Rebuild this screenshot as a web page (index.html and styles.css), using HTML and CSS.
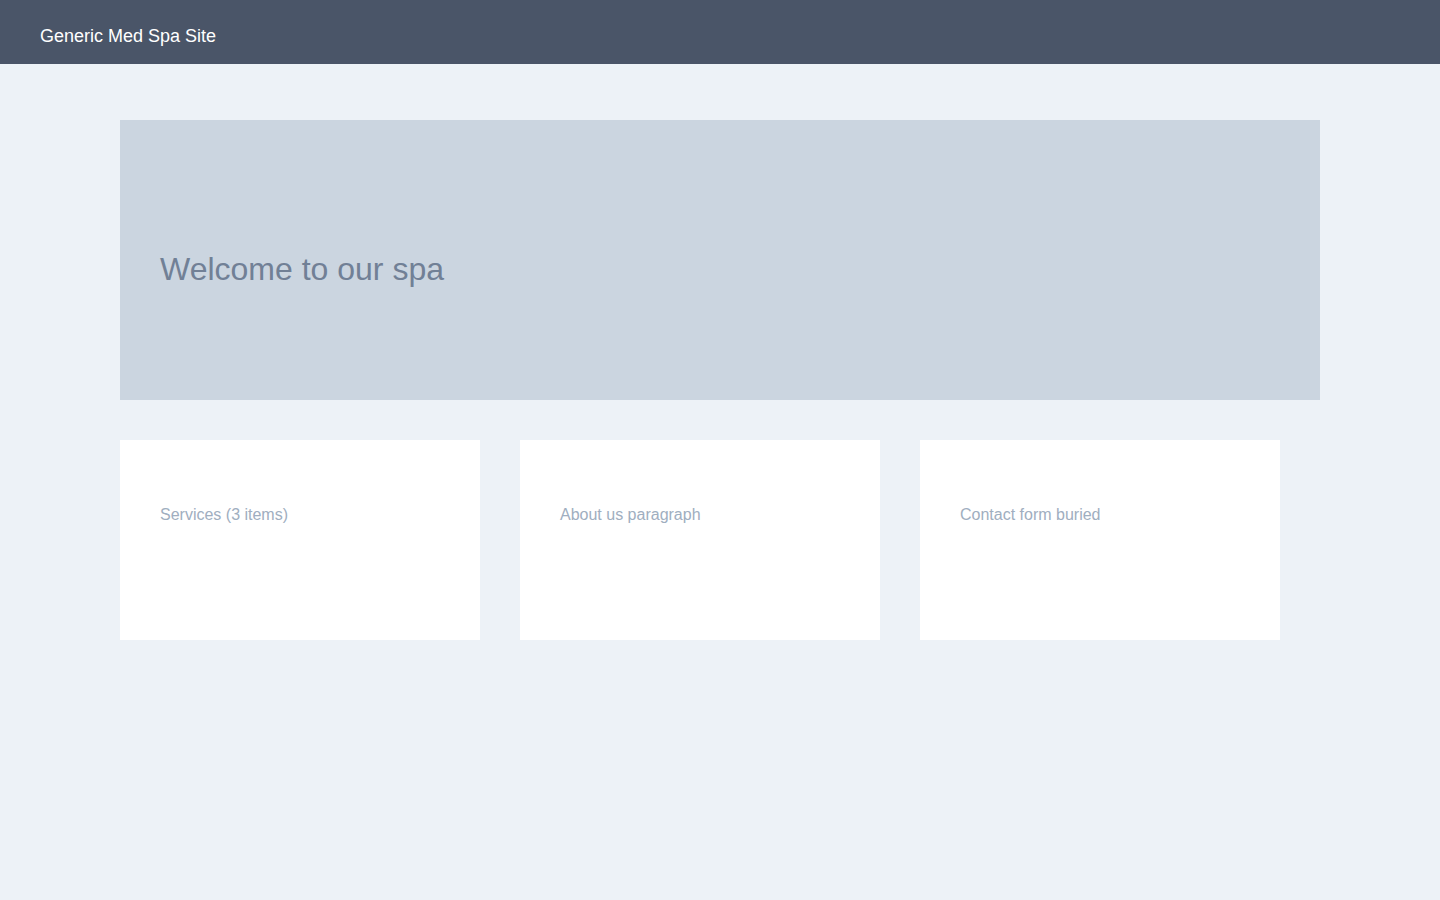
FILE: index.html
```html
<!DOCTYPE html>
<html lang="en">
<head>
  <meta charset="UTF-8" />
  <title>Generic Med Spa Site</title>
  <link rel="stylesheet" href="styles.css">
</head>
<body>

  <header class="topbar">
    <span class="site-name">Generic Med Spa Site</span>
  </header>

  <main class="page">
    <section class="hero">
      <h1>Welcome to our spa</h1>
    </section>

    <div class="cards">
      <div class="card"><p>Services (3 items)</p></div>
      <div class="card"><p>About us paragraph</p></div>
      <div class="card"><p>Contact form buried</p></div>
    </div>
  </main>

</body>
</html>
```

FILE: styles.css
```css
* {
  box-sizing: border-box;
}
body {
  margin: 0;
  font-family: 'Liberation Sans', Arial, sans-serif;
  background: #edf2f7;
  min-height: 900px;
}
.topbar {
  height: 64px;
  padding: 26px 40px 0;
  background: #4a5568;
}
.site-name {
  display: block;
  color: #ffffff;
  font-size: 18px;
}
.page {
  padding: 56px 120px;
}
.hero {
  height: 280px;
  padding: 131px 40px 0;
  background: #cbd5e0;
  margin-bottom: 40px;
}
.hero h1 {
  margin: 0;
  font-size: 32px;
  font-weight: normal;
  color: #718096;
}
.cards {
  display: flex;
  gap: 40px;
}
.card {
  width: 360px;
  height: 200px;
  padding: 66px 40px 0;
  background: #fff;
}
.card p {
  margin: 0;
  font-size: 16px;
  color: #a0aec0;
}
```
